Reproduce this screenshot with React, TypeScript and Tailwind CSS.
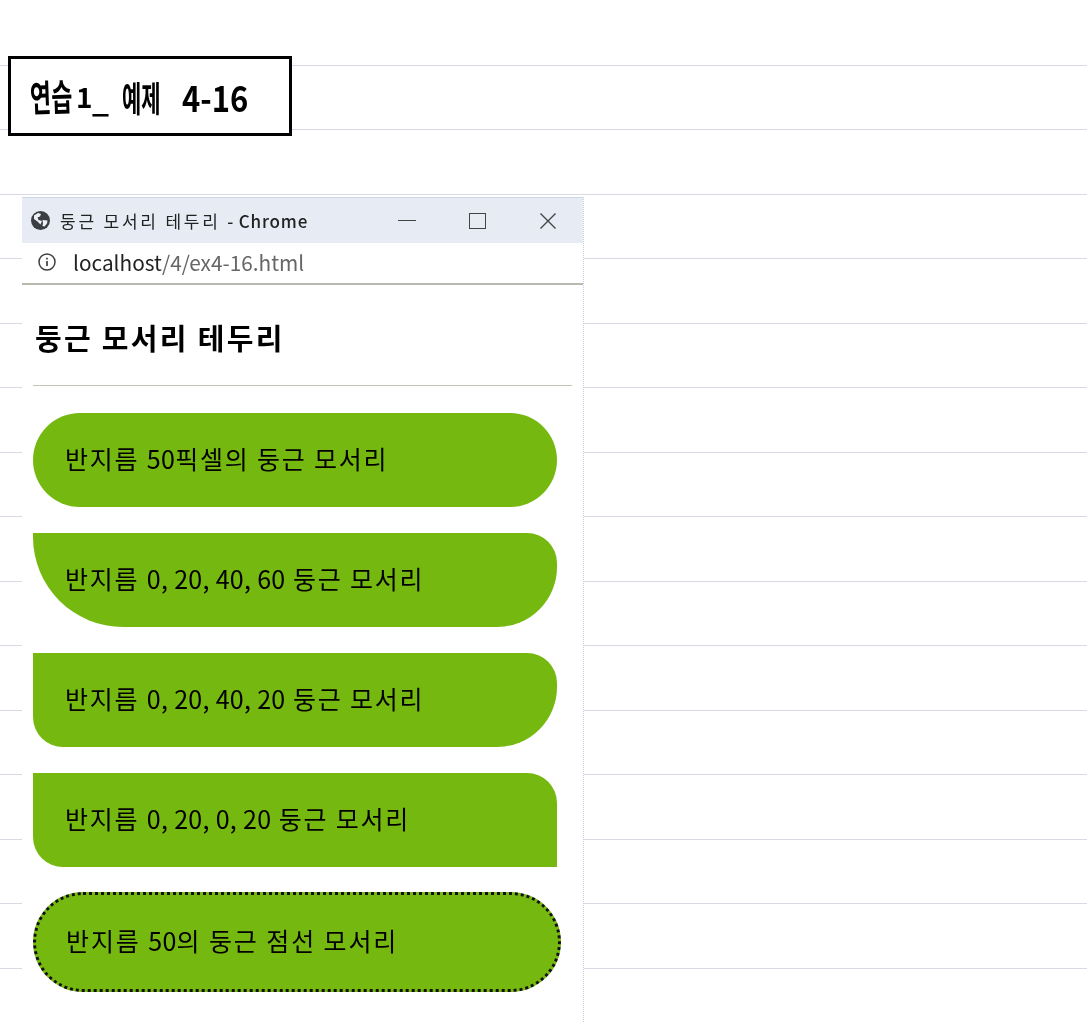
import React from "react";

const KR = { fontFamily: '"Noto Sans CJK KR", "Noto Sans", sans-serif' };

function Globe() {
  return (
    <svg width="21" height="21" viewBox="0 0 21 21" className="shrink-0">
      <circle cx="10.5" cy="10.5" r="9.5" fill="#3c3f42" />
      <path d="M4 5.5l4-2.5 3 1-1 2.5-2.5 1 1 2.5 3.5 1-1.5 3.5-3-3-3.5-2.5z" fill="#eef1f6" />
      <path d="M12.5 10l5 .5-.5 3-2.5 3-2-.5.5-3z" fill="#eef1f6" />
    </svg>
  );
}

function Info() {
  return (
    <svg width="18" height="18" viewBox="0 0 18 18" className="shrink-0">
      <circle cx="9" cy="9" r="8" fill="none" stroke="#3f3f3f" strokeWidth="1.5" />
      <path d="M9 8v5M9 4.8v1.8" stroke="#3f3f3f" strokeWidth="1.7" fill="none" />
    </svg>
  );
}

function Num({ children }: { children: React.ReactNode }) {
  return <span className="tracking-[0.3px]">{children}</span>;
}

const boxes = [
  { before: "반지름 ", num: "50", after: "픽셀의 둥근 모서리", cls: "rounded-[47px]" },
  { before: "반지름 ", num: "0, 20, 40, 60", after: " 둥근 모서리", cls: "rounded-[0_30px_60px_90px]" },
  { before: "반지름 ", num: "0, 20, 40, 20", after: " 둥근 모서리", cls: "rounded-[0_30px_60px_30px]" },
  { before: "반지름 ", num: "0, 20, 0, 20", after: " 둥근 모서리", cls: "rounded-[0_30px_0_30px]" },
];

export default function App() {
  return (
    <div
      className="h-[1022px] w-[1087px] overflow-hidden bg-white bg-[repeating-linear-gradient(to_bottom,transparent_0,transparent_64px,#d8d8e6_64px,#d8d8e6_65px,transparent_65px,transparent_128px,#d8d8e6_128px,#d8d8e6_129px)] bg-[position:0_1px] pl-2 pt-14 blur-[0.4px]"
      style={KR}
    >
      <div className="flex h-20 w-[284px] items-center border-[3px] border-black bg-white pl-[19px] font-bold leading-none text-black">
        <span className="w-[46px] origin-left -rotate-2 scale-x-[0.62] whitespace-nowrap text-[37px]">연습</span>
        <span className="w-[16px] text-[28px]">1</span>
        <span className="w-[30px] pt-[6px] text-[30px]">_</span>
        <span className="w-[60px] origin-left scale-x-[0.6] whitespace-nowrap text-[35px]">예제</span>
        <span className="origin-left scale-x-[0.86] whitespace-nowrap text-[36px]">4-16</span>
      </div>

      <div className="ml-[14px] mt-[61px] h-[825px] w-[562px] border-r border-dotted border-r-[#c3cde6] bg-white">
        <div className="flex h-[46px] items-center border-t border-[#cfd6e4] bg-[#e7ecf4] pl-[8px]">
          <Globe />
          <span className="ml-[9px] whitespace-nowrap text-[17px] leading-none tracking-[2.8px] text-[#222]">
            둥근 모서리 테두리 <span className="font-medium tracking-[0.8px]">- Chrome</span>
          </span>
          <div className="ml-auto mr-[26px] flex items-center gap-[53px]">
            <div className="h-[1.5px] w-[18px] bg-[#444]" />
            <div className="h-[16px] w-[17px] border-[1.5px] border-[#444]" />
            <svg width="18" height="18" viewBox="0 0 18 18">
              <path d="M1.5 1.5l15 15M16.5 1.5l-15 15" stroke="#444" strokeWidth="1.4" fill="none" />
            </svg>
          </div>
        </div>
        <div className="flex h-[42px] items-center border-b-2 border-[#b9b9b0] bg-white pb-[2px] pl-[16px]">
          <Info />
          <span className="ml-[17px] text-[20.8px] leading-none text-[#666]">
            <span className="text-[#222]">localhost</span>/4/ex4-16.html
          </span>
        </div>
        <div className="pl-[11px]">
          <h1 className="flex h-[100px] items-center pl-[2px] pt-[5px] text-[29px] font-bold leading-none tracking-[2.3px] text-black">
            둥근 모서리 테두리
          </h1>
          <div className="h-px w-[539px] bg-[#c4c4b4]" />
          <div className="mt-[27px] flex w-[524px] flex-col gap-[26px]">
            {boxes.map((b) => (
              <div
                key={b.num}
                className={`flex h-[94px] items-center whitespace-pre bg-[#75b80f] pb-[4px] pl-[32px] text-[25px] leading-none tracking-[1.8px] text-black ${b.cls}`}
              >
                <span>
                  {b.before}
                  <Num>{b.num}</Num>
                  {b.after}
                </span>
              </div>
            ))}
            <div className="-mt-[1px] flex h-[100px] w-[528px] items-center whitespace-pre rounded-[50px] border-[3px] border-dotted border-[#111] bg-[#75b80f] pb-[4px] pl-[30px] text-[25px] leading-none tracking-[1.9px] text-black">
              <span>
                반지름 <Num>50</Num>의 둥근 점선 모서리
              </span>
            </div>
          </div>
        </div>
      </div>
    </div>
  );
}
